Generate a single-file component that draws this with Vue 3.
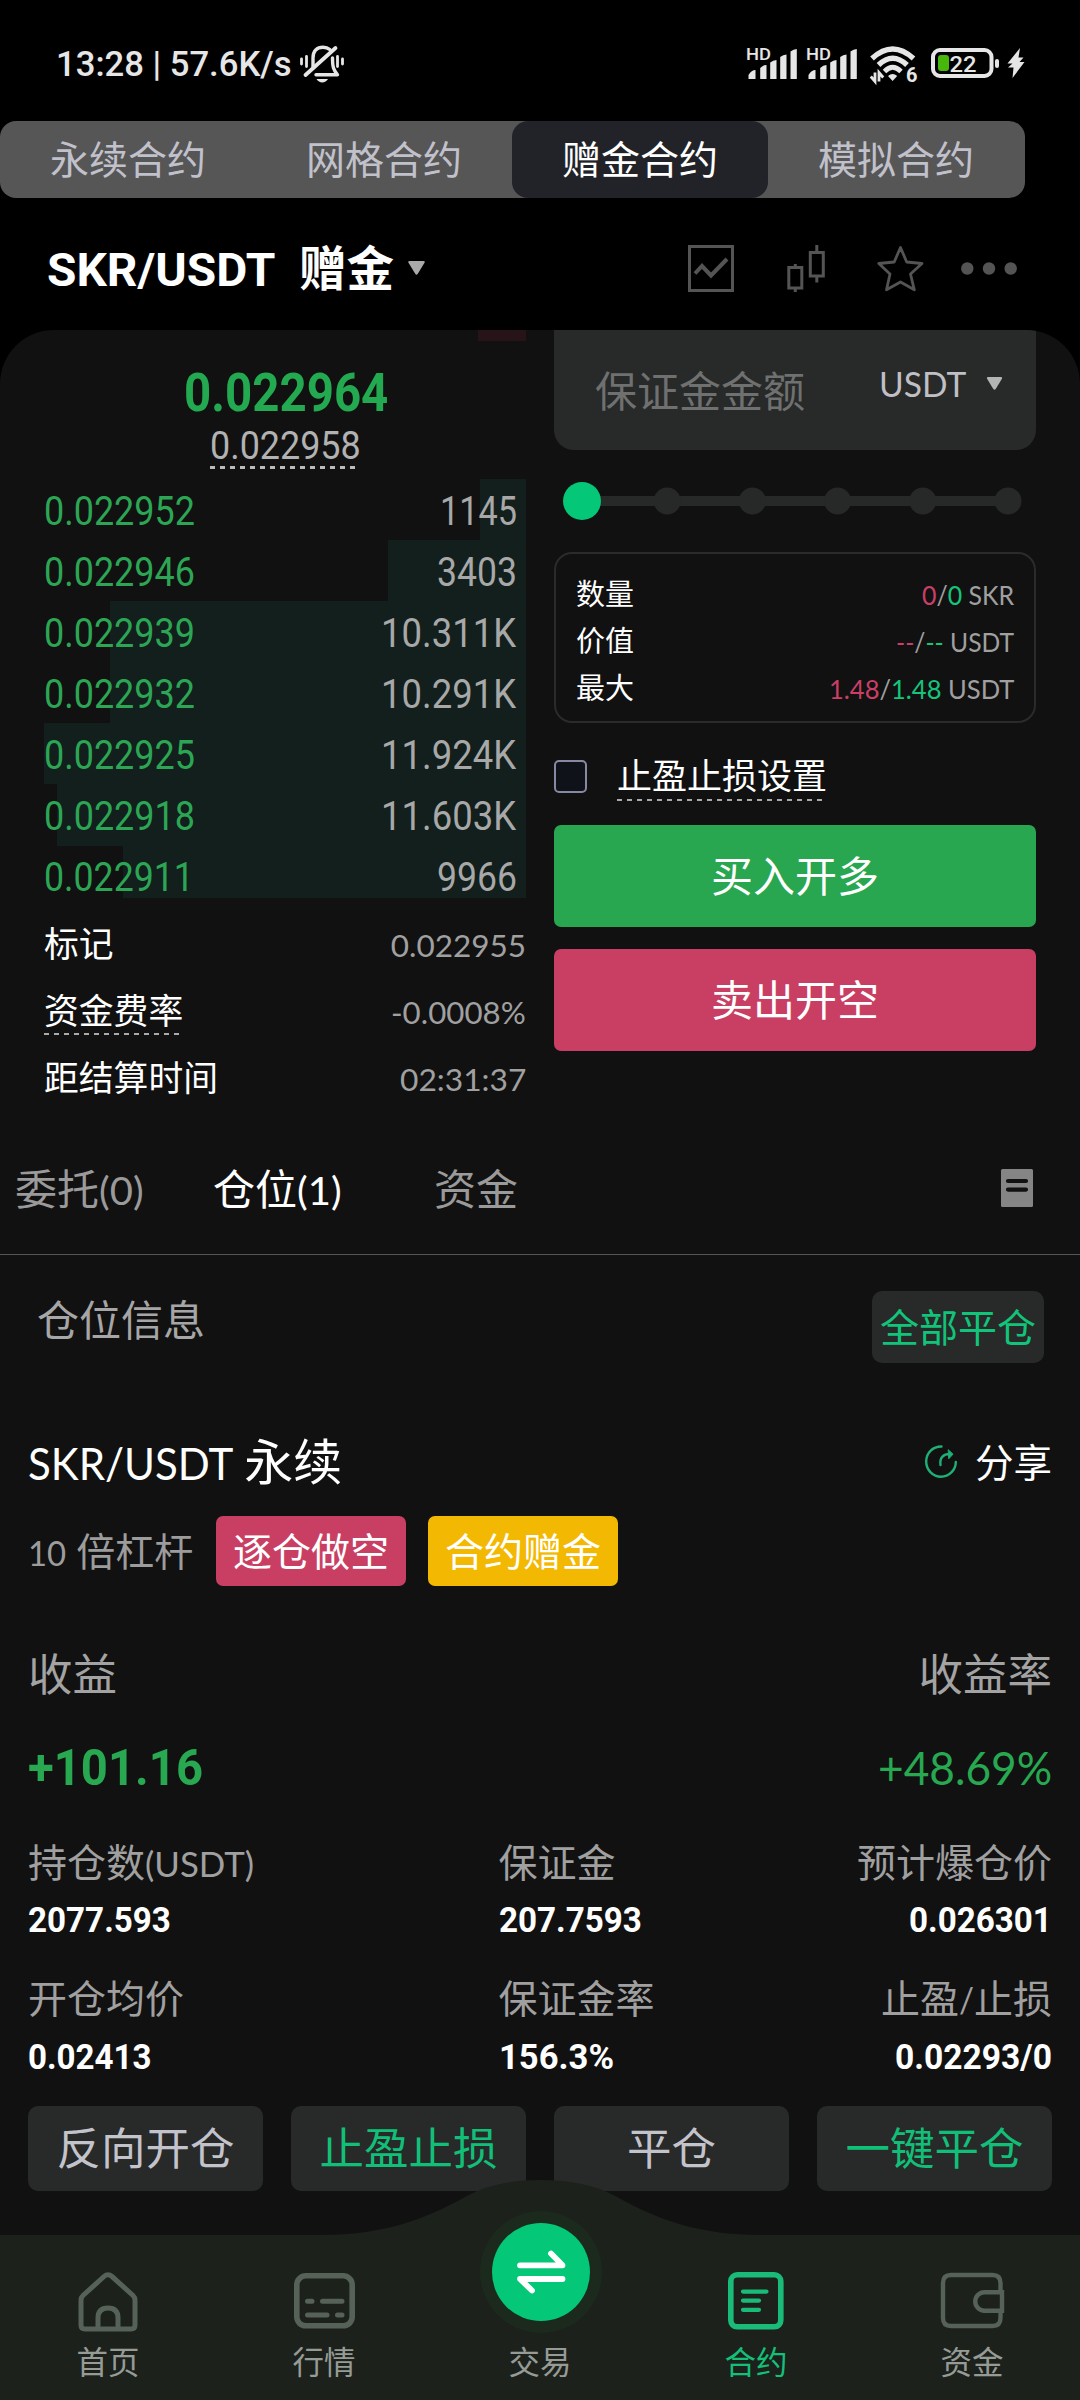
<script setup>
// Squeezes a text run horizontally so that it occupies the given width.
const vFit = {
  mounted(el, { value }) {
    const natural = el.offsetWidth
    if (!natural || !value) return
    el.style.transform = `scaleX(${value / natural})`
    el.style.marginRight = `${value - natural}px`
  },
}

const markets = [
  { name: '永续合约' },
  { name: '网格合约' },
  { name: '赠金合约', active: true },
  { name: '模拟合约' },
]

const bids = [
  { price: '0.022952', pw: 151, qty: '1145', qw: 77, depth: 46 },
  { price: '0.022946', pw: 151, qty: '3403', qw: 80, depth: 138 },
  { price: '0.022939', pw: 151, qty: '10.311K', qw: 135, depth: 416.5 },
  { price: '0.022932', pw: 151, qty: '10.291K', qw: 135, depth: 416.5 },
  { price: '0.022925', pw: 151, qty: '11.924K', qw: 135, depth: 482 },
  { price: '0.022918', pw: 151, qty: '11.603K', qw: 135, depth: 469 },
  { price: '0.022911', pw: 150, qty: '9966', qw: 80, depth: 403 },
]

const stats = [
  { label: '标记', value: '0.022955', w: 135 },
  { label: '资金费率', value: '-0.0008%', w: 135, hint: true },
  { label: '距结算时间', value: '02:31:37', w: 126 },
]

const limits = [
  { label: '数量', short: '0', long: '0', unit: 'SKR', w: 92 },
  { label: '价值', short: '--', long: '--', unit: 'USDT', w: 118 },
  { label: '最大', short: '1.48', long: '1.48', unit: 'USDT', w: 185 },
]

const cells = [
  { label: '持仓数', extra: '(USDT)', ew: 109, value: '2077.593', w: 143 },
  { label: '保证金', value: '207.7593', w: 143 },
  { label: '预计爆仓价', value: '0.026301', w: 143 },
  { label: '开仓均价', value: '0.02413', w: 124 },
  { label: '保证金率', value: '156.3%', w: 115 },
  { label: '止盈', extra: '/', ew: 15, tail: '止损', value: '0.02293/0', w: 157 },
]

const actions = [
  { name: '反向开仓' },
  { name: '止盈止损', green: true },
  { name: '平仓' },
  { name: '一键平仓', green: true },
]
</script>

<template>
  <div class="screen">
    <header class="status">
      <div class="clock"><span v-fit="236" class="fit">13:28 | 57.6K/s</span></div>
      <svg class="bell" width="46" height="40" viewBox="0 0 46 40" fill="none" stroke="#e6e6e6" stroke-width="3.4" stroke-linecap="round">
        <path d="M14 24V14C14 7 18 3.2 24 3.2c3 0 5 .8 6.800 2.400" />
        <path d="M33.500 14c0 9 1 12 5 16.800H17" stroke-linejoin="round" />
        <path d="M36.500 4 6.500 31" stroke-width="3.800" />
        <path d="M2.500 15v5M7.500 12.500v10M38.500 12.500v10M43.500 15v5" stroke-width="2.800" />
        <path d="M17.500 35h11.500c-2.500 4.600-9 4.600-11.500 0z" fill="#e6e6e6" stroke="none" />
      </svg>
      <div class="status-icons">
        <svg v-for="n in 2" :key="n" class="signal" width="50" height="40" viewBox="0 0 50 40" fill="#e6e6e6">
          <text x="-1" y="15.500" class="hd" textLength="25" lengthAdjust="spacingAndGlyphs">HD</text>
          <path d="M1.500 31q3-5 7-5v9h-7zM13.200 24q3-3 6.300-3v14h-6.300zM23.200 18.500q3-2.500 6.300-2.500v19h-6.300zM33.200 13q3-2.500 6.300-2.500V35h-6.300zM43.500 7.500q3-2.500 6.300-2.500v30h-6.300z" />
        </svg>
        <svg class="wifi" width="48" height="40" viewBox="0 0 48 40" fill="none" stroke="#e6e6e6" stroke-width="5.400">
          <path d="M2 14.500Q22.600-4.500 43.500 14.500M8.500 21Q22.600 7.500 37 21" />
          <path d="M14.500 27.500Q22.600 19 31 27.500" stroke-width="4.800" />
          <path d="M18 32q4.600-4 9.200 0L22.600 37z" fill="#e6e6e6" stroke="none" />
          <path d="M5 28.500v9L.8 32.500M9 37.500v-9l4.200 5" stroke-width="2.800" />
          <text x="36" y="38" class="six" fill="#e6e6e6" stroke="none">6</text>
        </svg>
        <svg class="battery" width="68" height="40" viewBox="0 0 68 40">
          <rect x="2" y="6" width="58.500" height="26" rx="7" fill="none" stroke="#e6e6e6" stroke-width="4" />
          <rect x="7" y="11" width="11" height="16" rx="3" fill="#47b80b" />
          <text x="18.500" y="28" class="pct" fill="#e6e6e6" textLength="27" lengthAdjust="spacingAndGlyphs">22</text>
          <rect x="64" y="15" width="4" height="9" rx="2" fill="#e6e6e6" />
        </svg>
        <svg class="bolt" width="18" height="40" viewBox="0 0 18 40" fill="#e6e6e6">
          <path d="M13 4 .5 19.500h5L1 23.500h5.500L5.500 34 17.500 18h-5l4-4.500h-5z" />
        </svg>
      </div>
    </header>

    <nav class="markets">
      <div v-for="m in markets" :key="m.name" class="market" :class="{ active: m.active }">{{ m.name }}</div>
    </nav>

    <div class="title-bar">
      <div class="pair">
        <span class="din"><span v-fit="228" class="fit">SKR/USDT</span></span>
        <span class="pair-kind">赠金</span>
      </div>
      <svg class="caret" width="17" height="14" viewBox="0 0 17 14" fill="#aaa"><path d="M1.500 0h14q2 0 1 1.800L9.800 12.800q-1.300 1.700-2.600 0L.5 1.800Q-.5 0 1.500 0z" /></svg>
      <div class="tools">
        <svg width="46" height="47" viewBox="0 0 46 47" fill="none" stroke="#545454">
          <rect x="1.500" y="1.500" width="43" height="44" stroke-width="3" />
          <path d="M7 28.500 14 21l9 9.500L39 14" stroke-width="4" />
        </svg>
        <svg width="38" height="47" viewBox="0 0 38 47" fill="none" stroke="#545454" stroke-width="3">
          <path d="M1.800 22.500h13V43h-13zM8.300 19v3.500M8.300 43v4M23.300 7.500h13V31h-13zM29.800 0v7.500M29.800 31v6.500" />
        </svg>
        <svg width="47" height="47" viewBox="0 0 47 47" fill="none" stroke="#545454" stroke-width="2.800" stroke-linejoin="round">
          <path d="M23.500 2.500 29.700 17 45 18.500 33.500 29l3.800 15.800L23.500 37 9.500 44.800 13 29 1.800 18.500 17.200 17z" />
        </svg>
        <svg width="56" height="13" viewBox="0 0 56 13" fill="#545454">
          <circle cx="6.300" cy="6.500" r="6.200" /><circle cx="28" cy="6.500" r="6.200" /><circle cx="49.700" cy="6.500" r="6.200" />
        </svg>
      </div>
    </div>

    <main class="panel">
      <section class="trade">
        <div class="book">
          <div class="ask-tail"></div>
          <div class="last din"><span v-fit="204" class="fit">0.022964</span></div>
          <div class="index din"><span v-fit="151" class="fit">0.022958</span></div>
          <div class="bids">
            <div v-for="b in bids" :key="b.price" class="bid din">
              <i class="depth" :style="{ width: b.depth + 'px' }"></i>
              <span v-fit="b.pw" class="fit price">{{ b.price }}</span>
              <span class="qty"><span v-fit="b.qw" class="fit">{{ b.qty }}</span></span>
            </div>
          </div>
          <div class="stats">
            <div v-for="s in stats" :key="s.label" class="stat">
              <span :class="{ hint: s.hint }">{{ s.label }}</span>
              <span class="stat-value"><span v-fit="s.w" class="fit">{{ s.value }}</span></span>
            </div>
          </div>
        </div>

        <div class="order">
          <div class="amount">
            <span class="placeholder">保证金金额</span>
            <span class="unit">
              <span v-fit="87" class="fit">USDT</span>
              <svg width="17" height="13" viewBox="0 0 17 14" fill="#b4b4b6"><path d="M1.500 0h14q2 0 1 1.800L9.800 12.800q-1.300 1.700-2.600 0L.5 1.800Q-.5 0 1.500 0z" /></svg>
            </span>
          </div>
          <svg class="slider" width="482" height="102" viewBox="0 0 482 102" fill="#272828">
            <rect x="28" y="46" width="426" height="10" />
            <circle v-for="n in 5" :key="n" :cx="28 + n * 85.2" cy="51" r="13.500" />
            <circle cx="28" cy="51" r="19" fill="#04c777" />
          </svg>
          <div class="limits">
            <div v-for="l in limits" :key="l.label" class="limit">
              <span>{{ l.label }}</span>
              <span class="limit-value"><span v-fit="l.w" class="fit"><b class="down">{{ l.short }}</b>/<b class="up">{{ l.long }}</b> {{ l.unit }}</span></span>
            </div>
          </div>
          <div class="tpsl"><i class="box"></i><span>止盈止损设置</span></div>
          <button class="buy">买入开多</button>
          <button class="sell">卖出开空</button>
        </div>
      </section>

      <div class="tabs">
        <div class="tab t1">委托<span v-fit="45" class="fit lato">(0)</span></div>
        <div class="tab t2 on">仓位<span v-fit="45" class="fit lato">(1)</span></div>
        <div class="tab">资金</div>
        <svg class="list" width="32" height="38" viewBox="0 0 32 38">
          <rect width="32" height="38" rx="1.500" fill="#858585" />
          <path d="M7 12h18M7 20.600h18" stroke="#111" stroke-width="4.200" stroke-linecap="round" />
        </svg>
      </div>

      <div class="info-head">
        <span class="info-title">仓位信息</span>
        <button class="close-all">全部平仓</button>
      </div>

      <section class="position">
        <div class="pos-head">
          <div class="pos-name"><span v-fit="205" class="fit pos-pair">SKR/USDT</span><span class="pos-kind">永续</span></div>
          <div class="share">
            <svg width="32" height="33" viewBox="0 0 32 33" fill="none" stroke="#1fb077" stroke-width="2.400" stroke-linecap="round">
              <path d="M16.500 1.500C7.500 1.500 1.200 8 1.200 16.500S8 31.700 16 31.700s14.800-6.500 14.800-14.700" />
              <path d="M15.500 20c-1-7 2.500-11 9.500-11" />
              <path d="M23.500 5 28 9.200 24 13.500z" fill="#1fb077" stroke-width="1" />
            </svg>
            <span>分享</span>
          </div>
        </div>

        <div class="badges">
          <div class="lever"><span v-fit="38" class="fit lev-num">10</span><span>倍杠杆</span></div>
          <div class="badge red">逐仓做空</div>
          <div class="badge gold">合约赠金</div>
        </div>

        <div class="pnl-labels"><span>收益</span><span>收益率</span></div>
        <div class="pnl">
          <span class="pnl-abs din"><span v-fit="175" class="fit">+101.16</span></span>
          <span class="pnl-pct"><span v-fit="174" class="fit">+48.69%</span></span>
        </div>

        <div class="cells">
          <div v-for="c in cells" :key="c.label" class="cell">
            <div class="cell-label">{{ c.label }}<span v-if="c.extra" v-fit="c.ew" class="fit lato">{{ c.extra }}</span>{{ c.tail }}</div>
            <div class="cell-value din"><span v-fit="c.w" class="fit">{{ c.value }}</span></div>
          </div>
        </div>

        <div class="actions">
          <button v-for="a in actions" :key="a.name" class="action" :class="{ green: a.green }">{{ a.name }}</button>
        </div>
      </section>
    </main>

    <footer class="dock">
      <svg class="dock-bg" width="1080" height="220" viewBox="0 0 1080 220">
        <path d="M0 55H320C385 55 425 39 465 17 488 4 515 0 541 0s53 4 76 17c40 22 80 38 145 38h318v165H0z" fill="#1c211c" />
        <circle cx="541" cy="92" r="61" fill="#1c2a1e" />
        <circle cx="541" cy="92" r="49" fill="#04c777" />
        <path d="M520 85.300h42.500L551 73.500M562.500 99H520l12 11.500" fill="none" stroke="#fff" stroke-width="5.800" stroke-linecap="round" stroke-linejoin="round" />
      </svg>
      <div class="dock-items">
        <div class="dock-item">
          <svg width="60" height="60" viewBox="0 0 60 60" fill="none" stroke="#566157" stroke-width="5" stroke-linejoin="round">
            <path d="M3 53V28q0-2.500 2-4.500L26 4.500q4-3.500 8 0L55 23.500q2 2 2 4.500v25q0 4-4 4H7q-4 0-4-4z" />
            <path d="M20 57V46q0-10 10-10t10 10v11" />
          </svg>
          <span>首页</span>
        </div>
        <div class="dock-item">
          <svg width="61" height="60" viewBox="0 0 61 60" fill="none" stroke="#566157" stroke-width="5.600" stroke-linecap="round">
            <rect x="2.800" y="3.800" width="55.400" height="50" rx="9" />
            <path d="M13.500 29.300h4.500M28.500 29.300h19.500M13.500 43h19.500M43.500 43h4.500" stroke-width="5" />
          </svg>
          <span>行情</span>
        </div>
        <div class="dock-item"><svg width="60" height="60"></svg><span>交易</span></div>
        <div class="dock-item on">
          <svg width="56" height="60" viewBox="0 0 56 60" fill="none" stroke="#1abb78" stroke-width="5.600" stroke-linecap="round">
            <rect x="2.800" y="2.800" width="50" height="52" rx="6.500" />
            <path d="M15 19.600h23.500M15 28.600h16M15 37.800h16" stroke-width="4.200" />
          </svg>
          <span>合约</span>
        </div>
        <div class="dock-item">
          <svg width="64" height="60" viewBox="0 0 64 60" fill="none" stroke="#566157" stroke-width="4.400">
            <path d="M60.500 20.500V11q0-8-8-8H11q-8 0-8 8v35q0 8 8 8h41.500q8 0 8-8v-7" />
            <path d="M62 20.200H44.500a9 9 0 0 0 0 18.500H62z" />
          </svg>
          <span>资金</span>
        </div>
      </div>
    </footer>
  </div>
</template>

<style>
html,
body {
  margin: 0;
  background: #000;
}
</style>

<style scoped>
.screen {
  position: relative;
  width: 1080px;
  height: 2400px;
  overflow: hidden;
  background: #000;
  color: #fff;
  font-family: "Noto Sans CJK SC", sans-serif;
  white-space: nowrap;
}
svg {
  display: block;
  flex: none;
  overflow: visible;
}
button {
  border: 0;
  padding: 0;
  color: #fff;
  font-family: inherit;
  white-space: nowrap;
}
.fit {
  display: inline-block;
  transform-origin: 0 50%;
}
.din {
  font-family: Roboto, sans-serif;
}
.lato {
  font-family: Lato, sans-serif;
  font-size: 0.91em;
}

/* status bar */
.status {
  display: flex;
  height: 77px;
  padding-top: 44px;
}
.clock {
  width: 243px;
  padding-left: 56px;
  height: 40px;
  line-height: 41px;
  font-family: Roboto, sans-serif;
  font-weight: 500;
  font-size: 34.5px;
  color: #e6e6e6;
}
.status-icons {
  display: flex;
  margin-left: auto;
  padding-right: 55px;
}
.signal {
  margin-right: 10px;
}
.wifi {
  margin-left: 3px;
  margin-right: 13px;
}
.battery {
  margin-right: 8px;
}
.hd {
  font: 500 17px Roboto, sans-serif;
}
.six {
  font: 700 20px Roboto, sans-serif;
}
.pct {
  font: 500 21.5px Roboto, sans-serif;
}

/* market switcher */
.markets {
  display: flex;
  width: 1025px;
  height: 77px;
  border-radius: 16px;
  background: #565656;
}
.market {
  width: 256px;
  line-height: 73px;
  border-radius: 16px;
  text-align: center;
  font-size: 39px;
  color: #c1c1cc;
}
.market.active {
  background: #222328;
  color: #fff;
}

/* pair title */
.title-bar {
  display: flex;
  align-items: center;
  height: 132px;
  padding-left: 47px;
}
.pair {
  display: flex;
  align-items: baseline;
  width: 361px;
  line-height: 70px;
  padding-top: 7px;
  font-size: 47.5px;
  font-weight: 700;
}
.pair .din {
  width: 252px;
  font-size: 47px;
}
.pair-kind {
  font-weight: 700;
}
.caret {
  margin-top: 7px;
}
.tools {
  display: flex;
  align-items: center;
  margin-left: auto;
  margin-right: 63px;
  padding-top: 8px;
}
.tools svg:nth-child(2) {
  margin-left: 53px;
}
.tools svg:nth-child(3) {
  margin-left: 52px;
}
.tools svg:nth-child(4) {
  margin-left: 37px;
}

/* main panel */
.panel {
  height: 2070px;
  border-radius: 54px 54px 0 0;
  overflow: hidden;
  background: #111;
}
.trade {
  display: flex;
  gap: 28px;
  height: 770px;
  padding-left: 44px;
}
.book,
.order {
  display: flex;
  flex-direction: column;
  width: 482px;
}
.book > * {
  flex: none;
}
.ask-tail {
  align-self: flex-end;
  width: 48px;
  height: 11px;
  background: #261419;
}
.last {
  height: 61px;
  margin-top: 21px;
  padding-left: 3px;
  line-height: 61px;
  text-align: center;
  font-size: 53.5px;
  font-weight: 700;
  color: #23aa50;
}
.index {
  align-self: center;
  height: 46px;
  line-height: 46px;
  font-size: 39px;
  color: #b2b2b2;
  background: repeating-linear-gradient(90deg, #bbb 0 5px, transparent 5px 10px) 0 100% / 100% 3px no-repeat;
}
.bids {
  height: 418.5px;
  margin-top: 10px;
}
.bid {
  position: relative;
  box-sizing: border-box;
  display: flex;
  justify-content: space-between;
  height: 61.1px;
  padding-top: 12.5px;
  line-height: 40px;
  font-size: 40px;
  color: #2ca654;
}
.depth {
  position: absolute;
  top: 0;
  right: 0;
  height: 61.1px;
  background: #121f1c;
}
.bid:last-child .depth {
  height: 52px;
}
.price,
.qty {
  position: relative;
}
.qty {
  padding-right: 9.500px;
  color: #a8a8a8;
}
.stats {
  margin-top: 11px;
}
.stat {
  display: flex;
  justify-content: space-between;
  align-items: baseline;
  height: 67px;
  line-height: 67px;
  font-size: 34.8px;
}
.hint {
  background: repeating-linear-gradient(90deg, #aaa 0 5px, transparent 5px 10px) 0 57px / 136px 2px no-repeat;
}
.stat-value {
  font-family: Lato, sans-serif;
  font-size: 31.5px;
  color: #a0a0a0;
}

/* order form */
.amount {
  display: flex;
  flex: none;
  justify-content: space-between;
  align-items: center;
  height: 120px;
  padding: 0 33px 0 41px;
  border-radius: 0 0 20px 20px;
  background: #282929;
}
.placeholder {
  font-size: 42px;
  line-height: 60px;
  padding-bottom: 2px;
  color: #6f7070;
}
.unit {
  display: flex;
  align-items: center;
  gap: 20px;
  margin-bottom: 14px;
  font-family: Lato, sans-serif;
  font-size: 34px;
  color: #bfbfc4;
}
.unit .fit {
  margin-left: -1px;
}
.limits {
  box-sizing: border-box;
  flex: none;
  height: 171px;
  padding: 15px 20px 0 20px;
  border: 2.500px solid #2b2b2b;
  border-radius: 18px;
}
.limit {
  display: flex;
  justify-content: space-between;
  align-items: baseline;
  height: 47px;
  line-height: 47px;
  font-size: 29px;
}
.limit-value {
  font-family: Lato, sans-serif;
  font-size: 26.5px;
  color: #a0a0a0;
}
.limit-value b {
  font-weight: 400;
}
.down {
  color: #c93f66;
}
.up {
  color: #16c47b;
}
.tpsl {
  display: flex;
  align-items: center;
  height: 102px;
  line-height: 102px;
  font-size: 35px;
}
.box {
  box-sizing: border-box;
  width: 33px;
  height: 33px;
  margin: 5px 30px 0 0;
  border: 2.500px solid #8788a3;
  border-radius: 5px;
  background: #10121a;
}
.tpsl span {
  background: repeating-linear-gradient(90deg, #aaa 0 5px, transparent 5px 10px) 0 76px / 206px 2px no-repeat;
}
.buy,
.sell {
  flex: none;
  height: 102px;
  padding-bottom: 5px;
  border-radius: 7px;
  font-size: 42px;
}
.buy {
  background: #28a650;
}
.sell {
  margin-top: 22px;
  background: #c93f63;
}

/* order / position tabs */
.tabs {
  display: flex;
  align-items: center;
  height: 135px;
  padding: 19px 47px 0 15px;
  border-bottom: 1px solid #555;
  font-size: 42px;
  color: #9a9a9a;
}
.tab.on {
  color: #fff;
}
.t1 {
  width: 198px;
}
.t2 {
  width: 221px;
}
.list {
  margin: 3px 0 0 auto;
}

.info-head {
  display: flex;
  justify-content: space-between;
  align-items: center;
  height: 144px;
  padding: 0 36px 0 37px;
}
.info-title {
  margin-bottom: 19px;
  font-size: 42px;
  color: #a6a6a6;
}
.close-all {
  width: 172px;
  height: 72px;
  padding-bottom: 4px;
  border-radius: 10px;
  background: #282929;
  color: #12c47a;
  font-size: 39px;
}

/* position card */
.position {
  padding: 0 28px;
}
.pos-head {
  display: flex;
  justify-content: space-between;
  align-items: center;
  height: 112px;
  padding-top: 5px;
}
.pos-name {
  display: flex;
  align-items: baseline;
  margin-bottom: 3px;
  font-size: 49px;
}
.pos-pair {
  font-family: Lato, sans-serif;
  font-size: 43.5px;
}
.pos-kind {
  margin-left: 11px;
}
.share {
  display: flex;
  align-items: center;
  gap: 18px;
  margin-bottom: 1px;
  font-size: 38.5px;
}
.share svg {
  margin-top: 4px;
}
.badges {
  display: flex;
  height: 70px;
  line-height: 66px;
  font-size: 39px;
}
.lever {
  display: flex;
  align-items: baseline;
  width: 188px;
  color: #9c9c9c;
}
.lev-num {
  font-family: Lato, sans-serif;
  font-size: 35.5px;
}
.lever span:last-child {
  margin-left: 10px;
}
.badge {
  width: 190px;
  margin-right: 22px;
  border-radius: 7px;
  text-align: center;
}
.red {
  background: #c93f63;
}
.gold {
  background: #f3b802;
}
.pnl-labels {
  display: flex;
  justify-content: space-between;
  height: 60px;
  margin-top: 55.500px;
  line-height: 60px;
  font-size: 44.5px;
  color: #a3a3a3;
}
.pnl {
  display: flex;
  justify-content: space-between;
  height: 80px;
  margin-top: 26px;
  line-height: 80px;
  color: #27a851;
}
.pnl-abs {
  font-size: 50.5px;
  font-weight: 700;
}
.pnl-pct {
  font-family: Lato, sans-serif;
  font-size: 45.5px;
}
.cells {
  display: grid;
  grid-template-columns: 470.500px 1fr auto;
  row-gap: 16.500px;
  margin-top: 22px;
}
.cell-label,
.cell-value {
  height: 60.200px;
  line-height: 60px;
}
.cell-label {
  font-size: 39px;
  color: #a0a0a0;
}
.cell-value {
  font-size: 35.500px;
  font-weight: 700;
}
.cell:nth-child(3n) {
  text-align: right;
}
.actions {
  display: flex;
  gap: 28px;
  margin-top: 19.500px;
}
.action {
  width: 235px;
  height: 85px;
  padding-bottom: 7px;
  border-radius: 10px;
  background: #282929;
  color: #c3c3cc;
  font-size: 44.5px;
}
.action.green {
  color: #12bf78;
}

/* bottom navigation floats over the card */
.dock {
  position: absolute;
  left: 0;
  bottom: 0;
  width: 1080px;
  height: 220px;
}
.dock-bg {
  position: absolute;
  inset: 0;
}
.dock-items {
  position: relative;
  display: flex;
  padding-top: 91.500px;
}
.dock-item {
  display: flex;
  flex: 1;
  flex-direction: column;
  align-items: center;
  font-size: 31.5px;
  color: #969b96;
}
.dock-item span {
  margin-top: 5px;
  line-height: 47px;
}
.dock-item.on {
  color: #14bf78;
}
</style>
